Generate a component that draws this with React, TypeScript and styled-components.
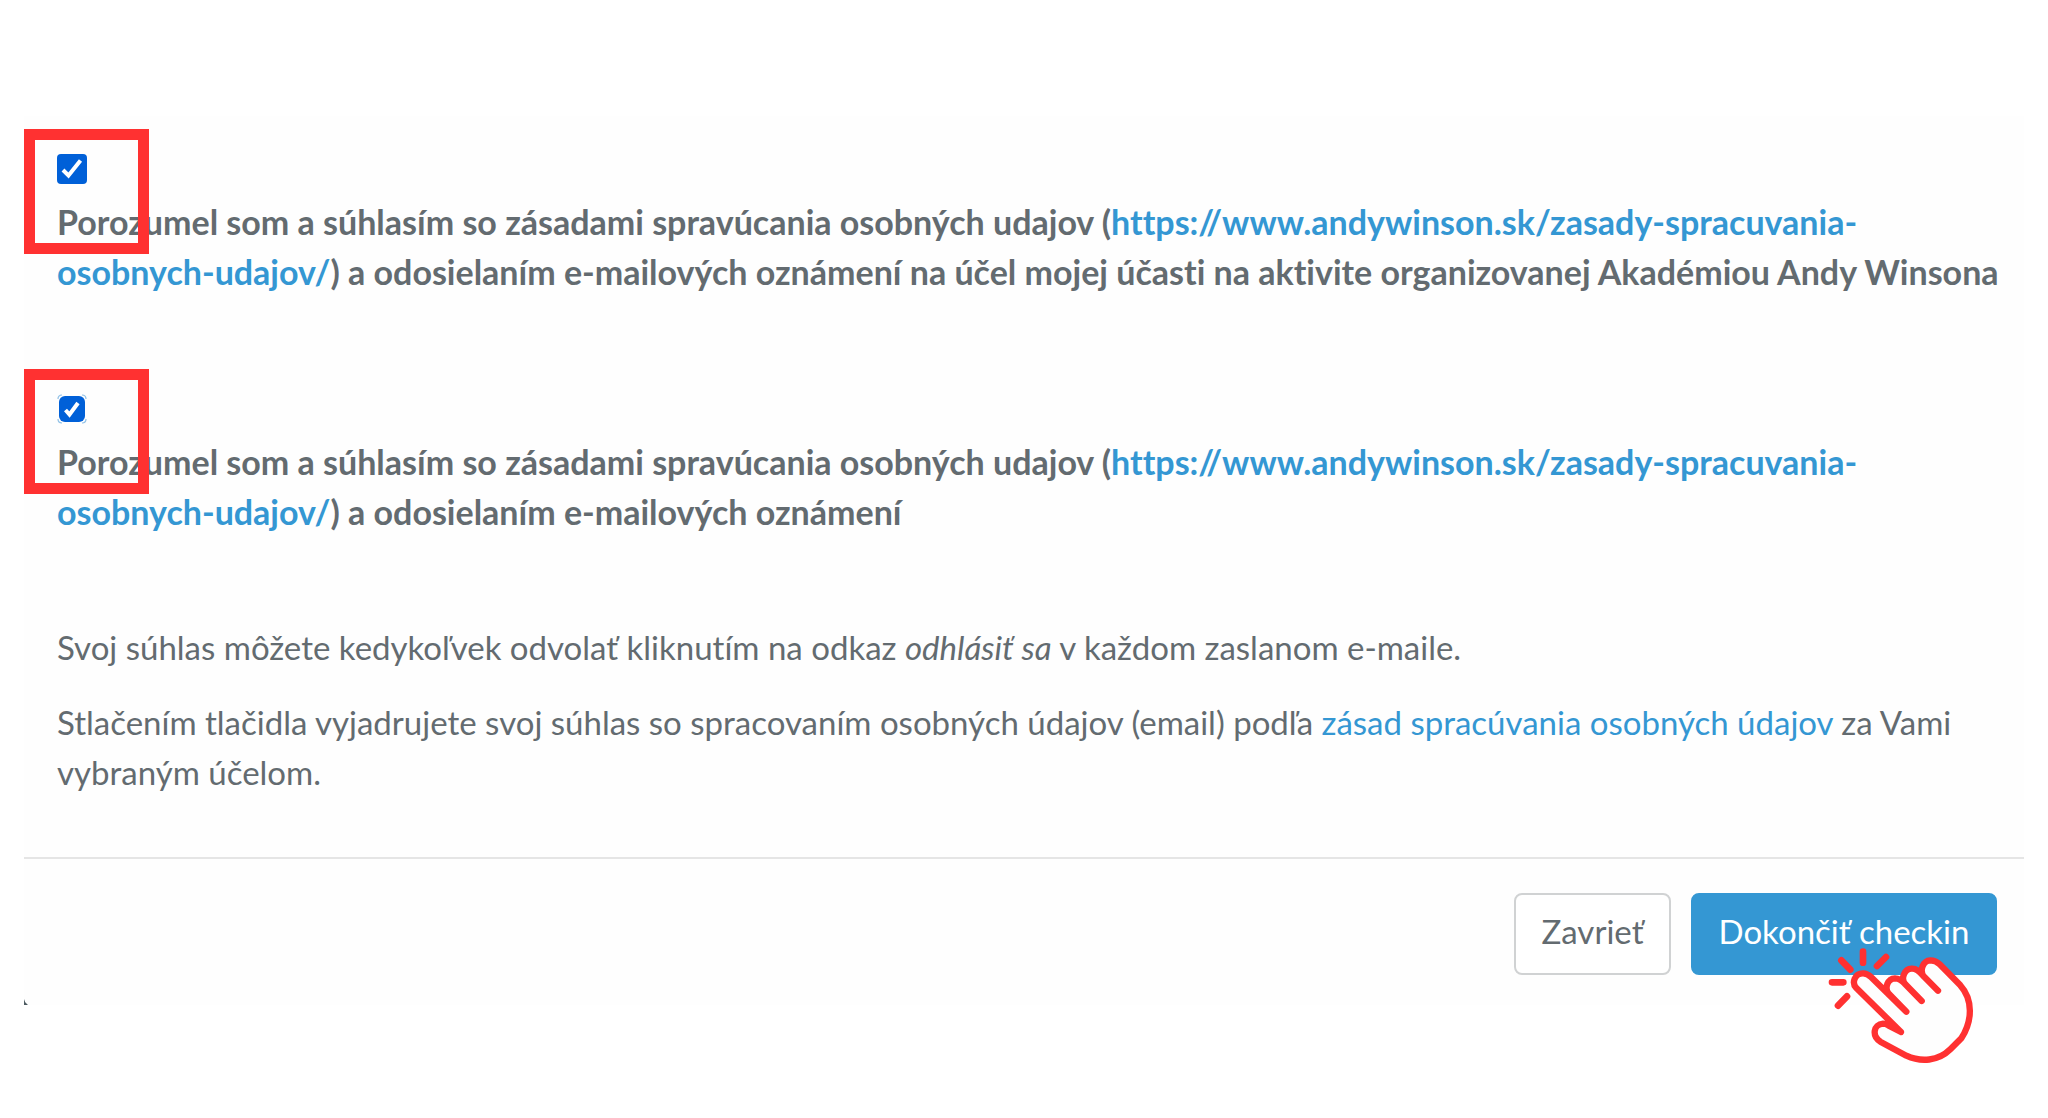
import React, { useState } from "react";
import styled, { createGlobalStyle } from "styled-components";

const ink = "#636b70";
const blue = "#3497d3";
const red = "#ff3131";

const GlobalStyle = createGlobalStyle`
  *, *::before, *::after { box-sizing: border-box; }
  body {
    margin: 0;
    background: #fff;
    color: ${ink};
    font-family: Lato, "Open Sans", sans-serif;
    font-size: 33px;
    line-height: 50px;
    font-variant-ligatures: none;
  }
`;

const Panel = styled.main`
  position: relative;
  margin: 116px 24px;
  background: #fefefe;
`;

const Body = styled.div`
  padding: 24px 24px 60px 33px;
`;

const Consent = styled.div`
  position: relative;
  display: flex;
  flex-direction: column;
  gap: 13px;
  padding-top: 14px;
  margin-bottom: 83px;
`;

const ConsentLabel = styled.label`
  font-size: 34px;
  font-weight: 700;
`;

const Frame = styled.span`
  position: absolute;
  top: -11px;
  left: -33px;
  width: 125px;
  height: 125px;
  border: 11px solid ${red};
  pointer-events: none;
`;

const Tick = styled.span`
  display: grid;
  width: 30px;
  height: 30px;

  > * {
    grid-area: 1 / 1;
  }
`;

const TickInput = styled.input<{ $ringed?: boolean }>`
  appearance: none;
  width: 30px;
  height: 30px;
  margin: 0;
  border: 2px solid #767676;
  border-radius: 4px;
  background: #fff;

  &:checked {
    border: ${(p) => (p.$ringed ? "2px solid transparent" : "0")};
    border-radius: ${(p) => (p.$ringed ? "8px" : "4px")};
    background: #0060d8;
    background-clip: padding-box;
  }
`;

const TickMark = styled.svg`
  width: 30px;
  height: 30px;
  pointer-events: none;
`;

const Link = styled.a`
  color: ${blue};
  text-decoration: none;
`;

const Notes = styled.div`
  display: flex;
  flex-direction: column;
  gap: 25px;
  padding-top: 2px;
`;

const Note = styled.p`
  margin: 0;
`;

const Footer = styled.footer`
  display: flex;
  justify-content: flex-end;
  gap: 20px;
  padding: 34px 27px 30px;
  border-top: 2px solid #e5e5e5;
`;

const Button = styled.button<{ $primary?: boolean }>`
  min-height: 82px;
  min-width: ${(p) => (p.$primary ? "306px" : "157px")};
  padding: 0 24px 6px;
  border: 2px solid ${(p) => (p.$primary ? blue : "#d0d2d3")};
  border-radius: 8px;
  background: ${(p) => (p.$primary ? blue : "#fff")};
  color: ${(p) => (p.$primary ? "#fff" : ink)};
  font: inherit;
  white-space: nowrap;
`;

const Target = styled.span`
  position: relative;
  display: flex;
`;

const Pointer = styled.svg`
  position: absolute;
  right: 20px;
  top: 53px;
  width: 150px;
  height: 120px;
  pointer-events: none;
`;

const Corner = styled.span`
  position: absolute;
  left: 0;
  bottom: 0;
  width: 4px;
  height: 6px;
  background: #4c5a60;
  clip-path: polygon(0 0, 30% 55%, 100% 100%, 0 100%);
`;

const policyUrl = "https://www.andywinson.sk/zasady-spracuvania-osobnych-udajov/";

function ConsentItem({ id, ringed, ending }: { id: string; ringed?: boolean; ending: string }) {
  const [checked, setChecked] = useState(true);
  return (
    <Consent>
      <Tick>
        <TickInput
          id={id}
          type="checkbox"
          $ringed={ringed}
          checked={checked}
          onChange={(e) => setChecked(e.target.checked)}
        />
        {checked && (
          <TickMark viewBox="0 0 30 30" aria-hidden="true">
            {ringed && (
              <path
                d="M1 5Q1 1 5 1M25 1Q29 1 29 5M29 25Q29 29 25 29M5 29Q1 29 1 25"
                fill="none"
                stroke="#8fc0e6"
                strokeWidth="1.2"
              />
            )}
            <path
              d={ringed ? "M8.5 16L12.5 20.5L21 9" : "M6 16L11.5 21.5L23.5 6.5"}
              fill="none"
              stroke="#fff"
              strokeWidth="4"
            />
          </TickMark>
        )}
      </Tick>
      <ConsentLabel htmlFor={id}>
        Porozumel som a súhlasím so zásadami spravúcania osobných udajov (
        <Link href={policyUrl}>{policyUrl}</Link>) {ending}
      </ConsentLabel>
      <Frame />
    </Consent>
  );
}

export default function App() {
  return (
    <>
      <GlobalStyle />
      <Panel>
        <Body>
          <ConsentItem
            id="consent-activity"
            ending="a odosielaním e-mailových oznámení na účel mojej účasti na aktivite organizovanej Akadémiou Andy Winsona"
          />
          <ConsentItem id="consent-mail" ringed ending="a odosielaním e-mailových oznámení" />
          <Notes>
            <Note>
              Svoj súhlas môžete kedykoľvek odvolať kliknutím na odkaz <em>odhlásiť sa</em> v každom
              zaslanom e-maile.
            </Note>
            <Note>
              Stlačením tlačidla vyjadrujete svoj súhlas so spracovaním osobných údajov (email) podľa{" "}
              <Link href={policyUrl}>zásad spracúvania osobných údajov</Link> za Vami vybraným účelom.
            </Note>
          </Notes>
        </Body>
        <Footer>
          <Button type="button">Zavrieť</Button>
          <Target>
            <Button type="button" $primary>
              Dokončiť checkin
            </Button>
            <Pointer viewBox="80 50 450 360" fill="none" stroke={red} strokeLinecap="round" strokeLinejoin="round" aria-hidden="true">
              <path
                fill="#fefefe"
                strokeWidth="19"
                d="M302 308L168 176C153 160 163 132 188 132C198 132 205 136 212 143L318 247L264 192C252 175 262 148 284 147C297 147 305 153 315 165L364 215L315 165C300 148 312 119 334 118C350 117 359 129 370 141L413 184L370 141C357 123 368 94 390 93C402 93 410 97 418 105L480 168C518 210 517 275 483 327L450 360C414 396 361 399 318 379L240 337C214 320 219 285 248 283C254 283 259 285 264 288Z"
              />
              <path strokeWidth="20" d="M188 67V100M123 93L150 121M95 159H129M140 201L113 229M257 83L230 110" />
            </Pointer>
          </Target>
        </Footer>
        <Corner />
      </Panel>
    </>
  );
}
